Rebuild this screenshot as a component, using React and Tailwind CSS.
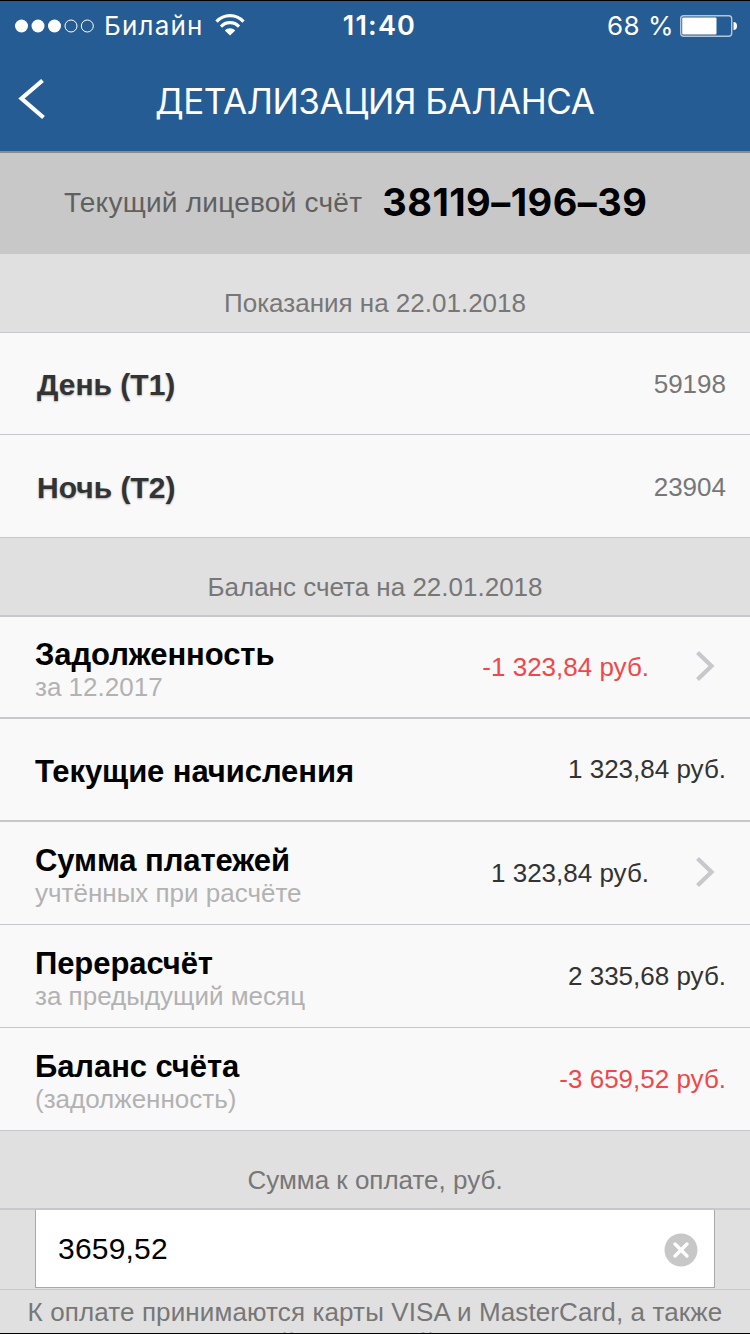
import * as React from "react";

const balanceRows = [
  { title: "Задолженность", note: "за 12.2017", amount: "-1 323,84 руб.", debt: true, link: true, line: "border-b-2", h: "h-[102px]" },
  { title: "Текущие начисления", amount: "1 323,84 руб.", line: "border-b-2", h: "h-[103px]" },
  { title: "Сумма платежей", note: "учтённых при расчёте", amount: "1 323,84 руб.", link: true, line: "border-b", h: "h-[103px]" },
  { title: "Перерасчёт", note: "за предыдущий месяц", amount: "2 335,68 руб.", line: "border-b", h: "h-[103px]" },
  { title: "Баланс счёта", note: "(задолженность)", amount: "-3 659,52 руб.", debt: true, line: "border-b", h: "h-[103px]" },
];

function StatusBar() {
  return (
    <div className="grid grid-cols-3 items-center h-[50px] pl-[15px] pr-[11px] font-[Inter] text-[26px] leading-[50px]">
      <div className="flex items-center">
        <svg width="80" height="14" viewBox="0 0 80 14" fill="#fff">
          <circle cx="6.5" cy="7" r="6.5" />
          <circle cx="23" cy="7" r="6.5" />
          <circle cx="39.5" cy="7" r="6.5" />
          <g fill="none" stroke="#fff" strokeWidth="1">
            <circle cx="56" cy="7" r="6" />
            <circle cx="72.3" cy="7" r="6" />
          </g>
        </svg>
        <span className="ml-[9px] tracking-[1.2px]">Билайн</span>
        <svg className="ml-[11px] -mt-0.5" width="30" height="22" viewBox="0 0 30 22">
          <g fill="none" stroke="#fff" strokeWidth="3.2">
            <path d="M1.5 7.6 C9 -0.4 21 -0.4 28.5 7.6" />
            <path d="M6 12.6 C11 7.4 19 7.4 24 12.6" />
          </g>
          <path d="M9.8 16.4 C12.6 13.6 17.4 13.6 20.2 16.4 L15 21.6 Z" fill="#fff" />
        </svg>
      </div>
      <span className="pl-[5px] text-center text-[27px] font-semibold tracking-[1.2px]">11:40</span>
      <div className="flex items-center justify-end">
        <span className="tracking-[0.5px]">68 %</span>
        <svg className="ml-[5px]" width="60" height="24" viewBox="0 0 60 24">
          <rect x="1.7" y="1.7" width="51" height="20.6" rx="3" fill="none" stroke="#b4c6da" strokeWidth="1.4" />
          <rect x="3.2" y="3.6" width="34.3" height="17" rx="1" fill="#fff" />
          <path d="M54.5 8 Q58 8 58 12 Q58 16 54.5 16 Z" fill="#fff" />
        </svg>
      </div>
    </div>
  );
}

function SectionTitle({ children, className }) {
  return (
    <h2 className={"flex items-end justify-center border-[#c8c7cc] text-[26px] leading-[30px] text-[#777] " + className}>
      <span>{children}</span>
    </h2>
  );
}

function MeterRow({ label, value, className }) {
  return (
    <li className={"flex items-center justify-between border-b border-[#c8c7cc] pt-0.5 pl-[37px] pr-6 " + className}>
      <span className="text-[30px] font-bold text-[#333] [text-shadow:0_1px_2px_rgba(0,0,0,0.3)]">{label}</span>
      <span className="text-[26px] text-[#777]">{value}</span>
    </li>
  );
}

function BalanceRow({ row }) {
  return (
    <li className={"flex items-center justify-between border-[#c8c7cc] pl-[35px] pr-6 " + row.h + " " + row.line}>
      <div className={row.note ? "pt-[6px]" : "pt-1"}>
        <div className="text-[31px] leading-[34px] font-bold tracking-[-0.08px] text-black">{row.title}</div>
        {row.note && <div className="text-[26px] leading-[30px] text-[#b2b2b2]">{row.note}</div>}
      </div>
      <div className="flex items-center">
        <span className={"text-[26px] " + (row.debt ? "text-[#f0474a]" : "text-[#333]")}>{row.amount}</span>
        {row.link && (
          <svg className="ml-[46px] mr-[11px] mb-0.5" width="20" height="32" viewBox="0 0 20 32">
            <path d="M2.5 2.5 L16.5 16 L2.5 29.5" fill="none" stroke="#c7c7cc" strokeWidth="4.2" />
          </svg>
        )}
      </div>
    </li>
  );
}

function App() {
  return (
    <div className="flex flex-col w-[750px] h-[1334px] overflow-hidden bg-[#e0e0e0] border-y border-black font-['Liberation_Sans',sans-serif]">
      <header className="h-[152px] shrink-0 bg-[#265c94] border-b-2 border-[#8c8c8c] text-white">
        <StatusBar />
        <div className="flex h-[100px] items-center pl-[18px]">
          <svg className="mb-1" width="28" height="42" viewBox="0 0 28 42">
            <path d="M24.5 2.5 L3.5 20.5 L25.5 39.5" fill="none" stroke="#fff" strokeWidth="4.2" />
          </svg>
          <h1 className="ml-[109px] font-[Inter] text-[35px] tracking-[-0.45px] whitespace-nowrap">ДЕТАЛИЗАЦИЯ БАЛАНСА</h1>
        </div>
      </header>

      <div className="flex h-[101px] shrink-0 items-center bg-[#c8c8c8] pb-0.5 pl-[64px]">
        <span className="text-[28px] tracking-[0.25px] text-[#606060]">Текущий лицевой счёт</span>
        <span className="ml-5 font-[Inter] text-[38px] font-bold tracking-[0.45px] text-black">38119–196–39</span>
      </div>

      <SectionTitle className="h-[79px] shrink-0 border-b pb-[14px]">Показания на 22.01.2018</SectionTitle>
      <ul className="shrink-0 bg-[#f9f9f9]">
        <MeterRow label="День (Т1)" value="59198" className="h-[102px]" />
        <MeterRow label="Ночь (Т2)" value="23904" className="h-[103px]" />
      </ul>

      <SectionTitle className="h-[79px] shrink-0 border-b-2 pb-[13px]">Баланс счета на 22.01.2018</SectionTitle>
      <ul className="shrink-0 bg-[#f9f9f9]">
        {balanceRows.map((row) => (
          <BalanceRow row={row} key={row.title} />
        ))}
      </ul>

      <SectionTitle className="h-[79px] shrink-0 border-b-2 pb-[13px]">Сумма к оплате, руб.</SectionTitle>
      <div className="h-20 shrink-0 border-b border-[#c8c7cc] px-[35px]">
        <div className="flex h-[78px] items-center justify-between border border-t-0 border-[#a9a9a9] bg-white pl-[22px] pr-4">
          <span className="text-[30px] tracking-[0.2px] text-black">3659,52</span>
          <svg className="mt-0.5" width="34" height="34" viewBox="0 0 34 34">
            <circle cx="17" cy="17" r="16.5" fill="#c7c7c7" />
            <path d="M11 11 L23 23 M23 11 L11 23" stroke="#fff" strokeWidth="3.4" strokeLinecap="round" />
          </svg>
        </div>
      </div>
      <p className="pt-[7px] text-center text-[26px] leading-[31px] tracking-[0.12px] text-[#777]">
        <span className="whitespace-nowrap">К оплате принимаются карты VISA и MasterCard, а также</span>
        <br />
        национальной платёжной системы "МИР"
      </p>
    </div>
  );
}

export default App;
